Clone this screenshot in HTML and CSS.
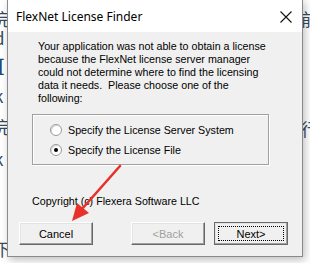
FILE: index.html
```html
<!DOCTYPE html>
<html lang="en">
<head>
    <meta charset="UTF-8">
    <title>FlexNet License Finder</title>
    <link rel="stylesheet" href="styles.css">
</head>
<body>
    <div class="desktop">
        <div class="bg-left">
            <span style="top: 6px">完</span>
            <span style="top: 25px">d</span>
            <span class="blue" style="top: 52px">[</span>
            <span style="top: 83px">k</span>
            <span style="top: 114px">完</span>
            <span style="top: 146px">k</span>
            <span style="top: 236px">下</span>
        </div>
        <div class="bg-right">
            <span style="top: 6px">前</span>
            <span style="top: 116px">行</span>
        </div>
    </div>

    <div class="dialog">
        <div class="titlebar">
            <span class="title">FlexNet License Finder</span>
            <svg class="close" width="12" height="12" viewBox="0 0 12 12">
                <path d="M0.5 0.5 L11.5 11.5 M11.5 0.5 L0.5 11.5" stroke="#111" stroke-width="1.1" fill="none"/>
            </svg>
        </div>
        <div class="content">
            <p class="message">
                Your application was not able to obtain a license<br>
                because the FlexNet license server manager<br>
                could not determine where to find the licensing<br>
                data it needs.&nbsp; Please choose one of the<br>
                following:
            </p>
            <div class="group">
                <label class="option"><span class="radio"></span>Specify the License Server System</label>
                <label class="option"><span class="radio checked"></span>Specify the License File</label>
            </div>
            <p class="copyright">Copyright (c) Flexera Software LLC</p>
            <div class="buttons">
                <button class="btn">Cancel</button>
                <span class="spacer"></span>
                <button class="btn disabled">&lt;Back</button>
                <button class="btn default"><span class="focus">Next&gt;</span></button>
            </div>
        </div>
    </div>

    <svg class="arrow" width="310" height="263" viewBox="0 0 310 263">
        <line x1="120" y1="166" x2="82" y2="209" stroke="#e8312b" stroke-width="2.6" stroke-linecap="round"/>
        <polygon points="72,221 77,203 89,213" fill="#e8312b"/>
    </svg>
</body>
</html>
```

FILE: styles.css
```css
* {
    margin: 0;
    padding: 0;
    box-sizing: border-box;
}
body {
    width: 310px;
    height: 263px;
    overflow: hidden;
    position: relative;
    background: #ffffff;
    font-family: "Liberation Sans", Arial, sans-serif;
}
.desktop {
    display: flex;
    justify-content: space-between;
    height: 263px;
}
.bg-left, .bg-right {
    position: relative;
    width: 20px;
    height: 263px;
    font-family: "Noto Sans CJK SC", sans-serif;
    font-size: 17px;
    color: #3a4a5c;
}
.bg-left span {
    position: absolute;
    left: -6px;
}
.bg-right span {
    position: absolute;
    right: -8px;
}
.bg-left .blue {
    color: #24476e;
    font-weight: bold;
    left: -2px;
}
.dialog {
    position: absolute;
    left: 7px;
    top: -1px;
    width: 296px;
    height: 258px;
    border: 1px solid #8a8a8a;
    background: #f0f0f0;
    box-shadow: 2px 3px 8px rgba(0, 0, 0, 0.25);
    display: flex;
    flex-direction: column;
}
.titlebar {
    height: 32px;
    background: #ffffff;
    display: flex;
    align-items: center;
    justify-content: space-between;
    padding: 0 10px 0 8px;
}
.title {
    font-family: "Noto Sans", sans-serif;
    font-size: 12px;
    color: #000;
    padding-top: 1px;
}
.close {
    display: block;
    margin-top: 1px;
}
.content {
    flex: 1;
    padding: 8px 11px 0 11px;
    display: flex;
    flex-direction: column;
    font-size: 10.7px;
    color: #000;
}
.message {
    margin-left: 19px;
    line-height: 13px;
    white-space: nowrap;
}
.group {
    width: 237px;
    height: 51px;
    margin: 9px 0 0 13px;
    border: 1px solid #a0a0a0;
    box-shadow: inset 1px 1px 0 #ffffff, 1px 1px 0 #ffffff;
    display: flex;
    flex-direction: column;
    gap: 7px;
    padding: 8px 0 0 17px;
}
.option {
    display: flex;
    align-items: center;
    gap: 6px;
    height: 13px;
}
.radio {
    width: 12px;
    height: 12px;
    border-radius: 50%;
    background: #ffffff;
    border: 1px solid #9a9a9a;
    box-shadow: inset 1px 1px 0 #d8d8d8;
    display: flex;
    align-items: center;
    justify-content: center;
}
.radio.checked::after {
    content: "";
    width: 4px;
    height: 4px;
    border-radius: 50%;
    background: #000;
}
.copyright {
    margin: 30px 0 0 13px;
    line-height: 13px;
}
.buttons {
    display: flex;
    gap: 9px;
    margin-top: 14px;
}
.spacer {
    width: 20px;
}
.btn {
    width: 74px;
    height: 23px;
    font-family: inherit;
    font-size: 11px;
    color: #000;
    background: #f0f0f0;
    border: 1px solid;
    border-color: #ffffff #696969 #696969 #ffffff;
    box-shadow: inset -1px -1px 0 #a0a0a0, inset 1px 1px 0 #e3e3e3;
    display: flex;
    align-items: center;
    justify-content: center;
}
.btn.disabled {
    color: #a0a0a0;
}
.btn.default {
    border-color: #696969;
    padding: 3px;
}
.focus {
    flex: 1;
    height: 100%;
    border: 1px dotted #000;
    display: flex;
    align-items: center;
    justify-content: center;
}
.arrow {
    position: absolute;
    left: 0;
    top: 0;
    pointer-events: none;
}
```
